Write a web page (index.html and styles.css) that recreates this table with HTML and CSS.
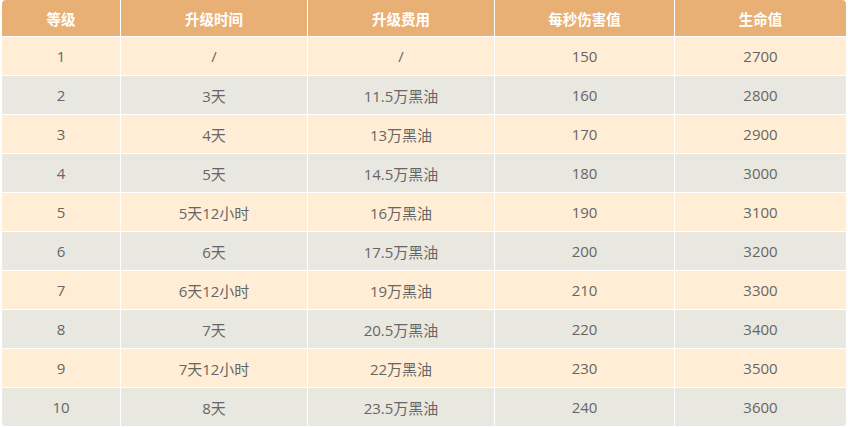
FILE: index.html
```html
<!DOCTYPE html>
<html lang="zh-CN">
<head>
<meta charset="utf-8">
<title>升级</title>
<link rel="stylesheet" href="styles.css">
</head>
<body>
<div class="table">
  <div class="row head">
    <div class="cell">等级</div><div class="cell">升级时间</div><div class="cell">升级费用</div><div class="cell">每秒伤害值</div><div class="cell">生命值</div>
  </div>
  <div class="row odd"><div class="cell">1</div><div class="cell">/</div><div class="cell">/</div><div class="cell">150</div><div class="cell">2700</div></div>
  <div class="row even"><div class="cell">2</div><div class="cell">3天</div><div class="cell">11.5万黑油</div><div class="cell">160</div><div class="cell">2800</div></div>
  <div class="row odd"><div class="cell">3</div><div class="cell">4天</div><div class="cell">13万黑油</div><div class="cell">170</div><div class="cell">2900</div></div>
  <div class="row even"><div class="cell">4</div><div class="cell">5天</div><div class="cell">14.5万黑油</div><div class="cell">180</div><div class="cell">3000</div></div>
  <div class="row odd"><div class="cell">5</div><div class="cell">5天12小时</div><div class="cell">16万黑油</div><div class="cell">190</div><div class="cell">3100</div></div>
  <div class="row even"><div class="cell">6</div><div class="cell">6天</div><div class="cell">17.5万黑油</div><div class="cell">200</div><div class="cell">3200</div></div>
  <div class="row odd"><div class="cell">7</div><div class="cell">6天12小时</div><div class="cell">19万黑油</div><div class="cell">210</div><div class="cell">3300</div></div>
  <div class="row even"><div class="cell">8</div><div class="cell">7天</div><div class="cell">20.5万黑油</div><div class="cell">220</div><div class="cell">3400</div></div>
  <div class="row odd"><div class="cell">9</div><div class="cell">7天12小时</div><div class="cell">22万黑油</div><div class="cell">230</div><div class="cell">3500</div></div>
  <div class="row even"><div class="cell">10</div><div class="cell">8天</div><div class="cell">23.5万黑油</div><div class="cell">240</div><div class="cell">3600</div></div>
</div>
</body>
</html>
```
FILE: styles.css
```css
html, body {
  margin: 0;
  padding: 0;
  background: #ffffff;
}
body {
  padding-left: 2px;
  font-family: "Open Sans", "Noto Sans CJK SC", sans-serif;
}
.table {
  width: 844px;
  height: 426px;
  display: flex;
  flex-direction: column;
  gap: 1px;
  background: #ffffff;
  border-radius: 4px;
  overflow: hidden;
}
.row {
  display: grid;
  grid-template-columns: 118px 186px 186px 179px 171px;
  column-gap: 1px;
  height: 38px;
}
.cell {
  display: flex;
  align-items: center;
  justify-content: center;
  font-size: 15px;
  color: #666666;
}
.head {
  height: 36px;
}
.head .cell {
  background: #e8b075;
  color: #ffffff;
  font-weight: bold;
  font-size: 14.5px;
  font-family: "Noto Sans CJK SC", sans-serif;
}
.odd .cell {
  background: #ffeed5;
}
.even .cell {
  background: #e9e8e0;
}
```
